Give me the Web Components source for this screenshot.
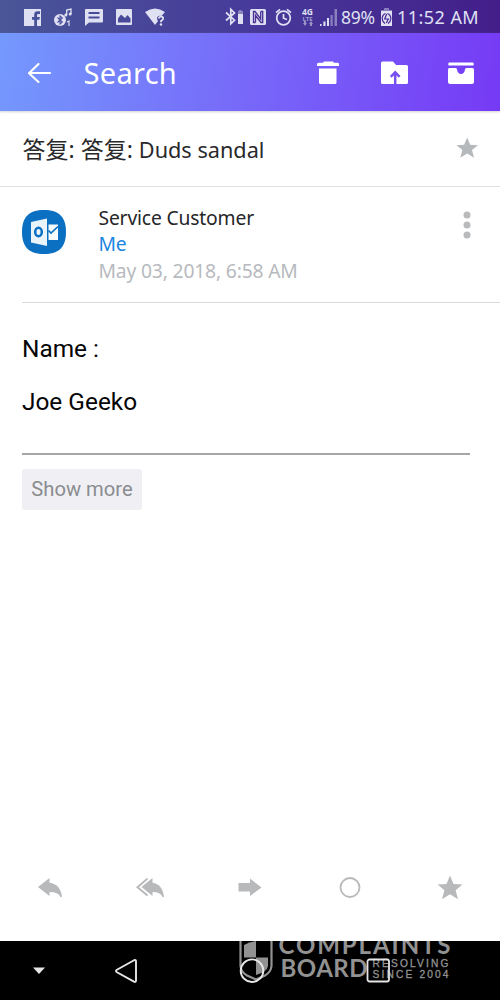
<!DOCTYPE html>
<html lang="en"><head><meta charset="utf-8"><title>Mail</title>
<style>html,body{margin:0;background:#fff}</style></head>
<body><mail-app></mail-app>
<script>
const ICONS={
fb:[17,20,'<path fill-rule="evenodd" d="M0 2H17V19H13V12.8H15.4L15.8 10H13V8.3Q13 7 14.4 7H16V4.3H13.6Q10.2 4.3 10.2 7.6V10H8V12.8H10.2V19H0z"/>'],
btmusic:[19,20,'<circle cx="6" cy="13" r="6"/><path d="M3.5 10.5 8.3 15 6 17V9L8.3 11 3.5 15.5" fill="none" stroke="#4a4f9c" stroke-width="1.1"/><path d="M12.7 8V3L17 2V7" fill="none" stroke="currentColor" stroke-width="1.3"/><circle cx="11.8" cy="8" r="1.5"/><circle cx="16.2" cy="7" r="1.5"/><path d="M13 15 15 14V19" fill="none" stroke="currentColor" stroke-width="1.2"/>'],
msg:[18,20,'<path fill-rule="evenodd" d="M1 2H17Q18 2 18 3V14.500Q18 15.500 17 15.500H4L0 19V3Q0 2 1 2zM3.500 5V7H14.500V5zM3.500 9.500V11.500H14.500V9.500z"/>'],
pic:[16,20,'<path fill-rule="evenodd" d="M1 2H15Q16 2 16 3V17Q16 18 15 18H1Q0 18 0 17V3Q0 2 1 2zM2 15.500H14.500V11.500L11.500 8 9 11 5 7.500 2 11.500z"/>'],
wifi:[20,20,'<path d="M0 5Q10-2 20 5L16.500 9Q12 8 12 12L13 14 10 18z"/><path d="M13.700 11.500Q14 9.500 16.200 9.700 18.600 10 18 12 17.700 13 16 14V15.300" fill="none" stroke="currentColor" stroke-width="1.800"/><circle cx="16" cy="17.500" r="1.200"/>'],
bt:[18,20,'<path d="M1 5.500 9.500 13.200 5.800 16.800V2.300L9.500 6 1 13.500" fill="none" stroke="currentColor" stroke-width="1.700"/><path opacity=".45" d="M13 4H14V3H16.500V4H18V8H13z"/><path d="M13 7H18V17H13z"/>'],
nfc:[16,20,'<rect y="2" width="16" height="16" rx="1.500"/><path d="M5.500 15.500H3.500V4.500H5L10.700 12V4.500M5.500 15.500V8.500L11 15.500H12.700V4.500H10.700" fill="none" stroke="#483092" stroke-width="1.300"/>'],
alarm:[17,20,'<g fill="none" stroke="currentColor" stroke-width="1.700"><circle cx="8.500" cy="11" r="6.800"/><path d="M8.500 7V11.200L12 12.500M1 5.700 5 2.300M16 5.700 12 2.300"/></g>'],
signal:[17,20,'<path d="M0 17H1.500V19H0zM3.400 14.500H5.500V19H3.400zM7 11H9V19H7z"/><path opacity=".45" d="M10.500 8H12.700V19H10.500zM14.500 2H17V19H14.500z"/>'],
batt:[11,20,'<path opacity=".45" d="M3 1H8V3H11V5H0V3H3z"/><path d="M0 4H11V19H0z"/><path d="M4.500 6.500Q1 8 1.200 12 1.500 15 4 16.500M6.500 6.500Q10 8 9.800 12 9.500 15 7 16.500M5.700 7 3.700 12H7.300L5.300 16" fill="none" stroke="#46258f" stroke-width="1.200"/>'],
back:[24,22,'<path d="M23 11H2M11.500 2 2 11.200 11.500 20" fill="none" stroke="currentColor" stroke-width="2.100" stroke-linecap="round" stroke-linejoin="round"/>'],
trash:[24,24,'<path d="M2.500 1.700H7L8 .5H17L18 1.700H21.700Q23 1.700 23 3V5H1V3.200Q1 1.700 2.500 1.700zM3 7.500H20.500V21.500Q20.500 23 19 23H4.500Q3 23 3 21.500z"/>'],
folder:[27,24,'<path d="M1.500.500H12L15 4H25.500Q27 4 27 5.500V21.500Q27 23 25.500 23H1.500Q0 23 0 21.500V2Q0 .500 1.500 .500z"/><path d="M14.200 23V12.500M9.800 15.800 14.200 11.200 18.600 15.800" fill="none" stroke="#7650ef" stroke-width="2.500"/>'],
archive:[26,24,'<rect x=".300" y="1.600" width="25.400" height="3" rx="1.200"/><path d="M1.500 7H7.800Q9 7 9 8.500 9.700 12.800 13 13 16.500 12.800 17 8.500 17 7 18.500 7H24.500Q26 7 26 8.500V21Q26 23 24 23H2Q0 23 0 21V8.500Q0 7 1.500 7z"/>'],
star:[26,26,'<path d="M13 .500 16.500 9 25.500 9.500 18.600 15.200 21 24.200 13 19.200 5 24.200 7.400 15.200 .500 9.500 9.500 9z"/>'],
more:[8,28,'<circle cx="4" cy="4" r="3.500"/><circle cx="4" cy="14" r="3.500"/><circle cx="4" cy="24" r="3.500"/>'],
reply:[24,20,'<path d="M0 9 11.500 0V4.700Q22.500 6 24 19H22.500Q20.500 14 11.500 14V18z"/>'],
replyall:[28,20,'<path d="M11.500.600 1.500 9.300 11.500 17.600" fill="none" stroke="currentColor" stroke-width="1.900"/><path d="M5.500 9 16.500 0V4.700Q26.500 6 28 19H26.500Q24.500 14 16.500 14V18z"/>'],
forward:[24,20,'<path d="M.500 5H12V.500L23.500 9.500 12 18V13.500H.500z"/>'],
ring:[22,22,'<circle cx="11" cy="10.500" r="9.500" fill="none" stroke="currentColor" stroke-width="1.800"/>'],
avatar:[44,44,'<path fill="#0b6fc2" d="M22 0C37 0 44 7 44 22S37 44 22 44 0 37 0 22 7 0 22 0z"/><path fill="#e9f3fa" d="M9 12 25 8.500V36L9 32.500z"/><path fill="#f8fbfd" d="M26.500 14.500H36V30H26.500z"/><path d="M26.500 20.500 29 23 36 16.500" fill="none" stroke="#0b6fc2" stroke-width="1.700"/><ellipse cx="16.500" cy="22" rx="3.300" ry="4.300" fill="none" stroke="#0b6fc2" stroke-width="2.500"/>'],
caret:[14,10,'<path d="M1 1.500H13L7 8z"/>'],
tri:[24,26,'<path d="M20.500 2Q22 1.500 22 3.500V22.500Q22 24.500 20 23.700L2.500 14Q1.500 13 2.500 12z" fill="none" stroke="currentColor" stroke-width="1.900" stroke-linejoin="round"/>'],
home:[26,26,'<circle cx="13" cy="12.700" r="11.300" fill="none" stroke="currentColor" stroke-width="1.900"/>'],
square:[24,26,'<rect x="1.500" y="1.500" width="21.500" height="22" rx="2" fill="none" stroke="currentColor" stroke-width="1.800"/>']
};
function define(name,html){
  const t=document.createElement('template');t.innerHTML=html;
  customElements.define(name,class extends HTMLElement{
    constructor(){super();this.attachShadow({mode:'open'}).append(t.content.cloneNode(true))}
  });
}
customElements.define('ui-icon',class extends HTMLElement{
  constructor(){super();this.attachShadow({mode:'open'})}
  connectedCallback(){
    const [w,h,body]=ICONS[this.getAttribute('name')],s=+this.getAttribute('scale')||1;
    this.shadowRoot.innerHTML=`<style>:host{display:block;flex:none;width:${w*s}px;height:${h*s}px}svg{display:block}</style><svg width="${w*s}" height="${h*s}" viewBox="0 0 ${w} ${h}" fill="currentColor">${body}</svg>`;
  }
});
define('lte-badge',`<style>:host{display:block;flex:none;width:13px;height:20px;font-family:"Noto Sans",sans-serif}svg{display:block;overflow:visible}</style>
<svg width="13" height="20" fill="currentColor"><text x="1" y="7.500" font-size="8.500" font-weight="700" textLength="11" lengthAdjust="spacingAndGlyphs">4G</text><text x="1.500" y="13.500" font-size="6" font-weight="700" opacity=".6" textLength="10" lengthAdjust="spacingAndGlyphs">LTE</text><path opacity=".55" d="M3 14H5V16H6L4 19 2 16H3zM9 19V17H8L10 14 12 17H11V19z"/></svg>`);
define('status-bar',`<style>
:host{display:flex;box-sizing:border-box;height:33px;padding:7px 20px 0 24px;align-items:flex-start;color:#dfe0f2;background:linear-gradient(90deg,#495697,#47399a 52%,#431e8a);font:17.5px/20px "Noto Sans",sans-serif;white-space:nowrap}
.l,.r{display:flex}.r{margin-left:auto}span{display:block}.time{letter-spacing:.45px;font-size:18px}</style>
<div class="l"><ui-icon name="fb"></ui-icon><ui-icon name="btmusic" style="margin-left:13px"></ui-icon><ui-icon name="msg" style="margin-left:12px"></ui-icon><ui-icon name="pic" style="margin-left:13px"></ui-icon><ui-icon name="wifi" style="margin-left:13px"></ui-icon></div>
<div class="r"><ui-icon name="bt"></ui-icon><ui-icon name="nfc" style="margin-left:7px"></ui-icon><ui-icon name="alarm" style="margin-left:9px"></ui-icon><lte-badge style="margin-left:9px"></lte-badge><ui-icon name="signal" style="margin-left:6px"></ui-icon><span style="margin-left:4px;width:36px;letter-spacing:-.2px">89%</span><ui-icon name="batt" style="margin-left:4px"></ui-icon><span class="time" style="margin-left:5px;width:83px">11:52 AM</span></div>`);
define('app-bar',`<style>
:host{display:flex;box-sizing:border-box;height:78px;align-items:center;padding:1px 26px 0 27px;color:#fff;background:linear-gradient(98deg,#7499fd,#7766f9 52%,#763af5);font:29px/40px "Noto Sans",sans-serif;box-shadow:0 1px 2px #aaa8;position:relative}
.title{margin-left:32.5px;letter-spacing:.3px}.actions{display:flex;margin-left:auto}ui-icon[name=folder]{margin:0 40px 0 41px}</style>
<ui-icon name="back"></ui-icon><div class="title"><slot></slot></div>
<div class="actions"><ui-icon name="trash"></ui-icon><ui-icon name="folder"></ui-icon><ui-icon name="archive"></ui-icon></div>`);
define('subject-row',`<style>
:host{display:flex;box-sizing:border-box;height:76px;align-items:center;justify-content:space-between;padding:0 22px 0 22.500px;border-bottom:1.500px solid #e0e0e0;color:#29292b;font:21.700px/30px "Noto Sans","Noto Sans CJK SC",sans-serif}
ui-icon{color:#b6b9bc}div{padding-top:2px;white-space:pre}::slotted([lang]){font-size:23px}</style><div><slot></slot></div><ui-icon name="star" scale=".86"></ui-icon>`);
define('sender-row',`<style>
:host{display:flex;box-sizing:border-box;height:116px;margin-left:22px;padding:17.500px 29px 0 0;border-bottom:1px solid #dadada;font:19.300px/26.700px "Noto Sans",sans-serif;letter-spacing:-.17px;align-items:flex-start;color:#262628}
ui-icon[name=avatar]{margin-top:5.500px}.who{margin-left:32.500px}.more{margin:6.500px 0 0 auto;color:#b9babc}
::slotted([slot=to]){color:#1a86e2}::slotted([slot=date]){color:#b7babe}.who ::slotted(*){display:block}</style>
<ui-icon name="avatar"></ui-icon><div class="who"><slot name="from"></slot><slot name="to"></slot><slot name="date"></slot></div><ui-icon class="more" name="more"></ui-icon>`);
define('message-body',`<style>
:host{display:block;flex:1;padding:31px 30px 0 22px;color:#050505;font:24.400px/30px Roboto,sans-serif}
::slotted(p){margin:0 0 23px!important}hr{margin:36px 0 14px;border:0;height:2px;background:#a6a6a6}
button{display:block;box-sizing:border-box;width:120px;height:41px;padding:0;border:0;border-radius:3px;background:#f0f0f4;color:#8a8c90;font:20.200px/39px Roboto,sans-serif}</style>
<slot></slot><hr><button>Show more</button>`);
define('reply-bar',`<style>:host{display:grid;grid-template-columns:repeat(5,100px);height:107px;box-sizing:border-box;padding-top:1px;place-items:center;color:#b7b9bb}</style>
<ui-icon name="reply"></ui-icon><ui-icon name="replyall"></ui-icon><ui-icon name="forward"></ui-icon><ui-icon name="ring"></ui-icon><ui-icon name="star"></ui-icon>`);
define('brand-mark',`<style>:host{display:block;width:222px;height:59px;overflow:hidden;font-family:Lato,sans-serif;color:#929292}svg{display:block}</style>
<svg width="222" height="59" fill="currentColor"><path d="M2.500-3V25Q3 31 9 34.500L18 38.500 27 34.500Q33 31 33.500 25V-3" fill="none" stroke="currentColor" stroke-width="2.200"/><path d="M6 4Q11 1 18 0V16.500H6z"/><path d="M18 16.500H30V25Q29 31 18 34z"/>
<text x="40.500" y="12.500" font-size="24" font-weight="700" textLength="172">COMPLAINTS</text><text x="42.500" y="36" font-size="24" font-weight="700" textLength="87">BOARD</text>
<g font-family="Liberation Sans,sans-serif" font-size="10.200" stroke="currentColor" stroke-width=".3"><text x="134.500" y="25.700" textLength="76">RESOLVING</text><text x="134.500" y="36.500" textLength="76">SINCE 2004</text></g></svg>`);
define('system-nav',`<style>:host{display:grid;grid-template-columns:78px 96px 156px 96px;height:59px;background:#000;position:relative;place-items:center;color:#e6e6e6}
brand-mark{position:absolute;left:238px;top:0}ui-icon{position:relative}</style>
<brand-mark></brand-mark><ui-icon name="caret"></ui-icon><ui-icon name="tri"></ui-icon><ui-icon name="home"></ui-icon><ui-icon name="square"></ui-icon>`);
define('mail-app',`<style>:host{display:flex;flex-direction:column;width:500px;height:1000px;background:#fff}
status-bar,app-bar,subject-row,sender-row,reply-bar,system-nav{flex:none}</style>
<status-bar></status-bar><app-bar>Search</app-bar><subject-row><span lang="zh">答复: 答复: </span>Duds sandal</subject-row>
<sender-row><span slot="from">Service Customer</span><span slot="to">Me</span><span slot="date">May 03, 2018, 6:58 AM</span></sender-row>
<message-body><p>Name :</p><p>Joe Geeko</p></message-body><reply-bar></reply-bar><system-nav></system-nav>`);
</script></body></html>
